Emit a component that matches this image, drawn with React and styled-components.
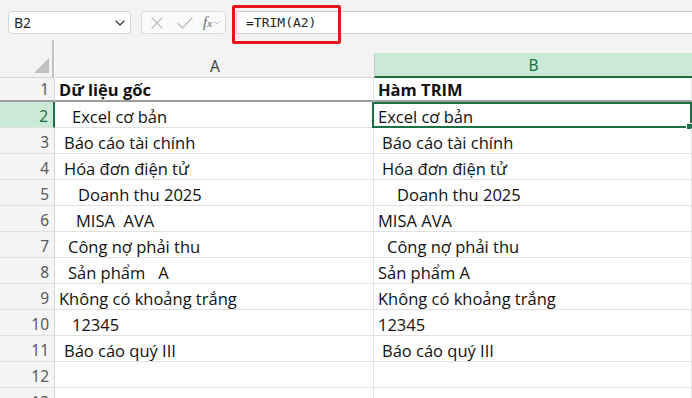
import React from 'react';
import styled, { createGlobalStyle } from 'styled-components';

const GREEN = '#1d7044';
const GREEN_BG = '#cae9d6';
const GRID = '#e1e1e1';

const Global = createGlobalStyle`
  html, body { margin: 0; padding: 0; background: #fff; }
  body { font-family: "Open Sans", "Noto Sans", sans-serif; }
`;

const Page = styled.div`
  width: 692px;
  height: 398px;
  overflow: hidden;
  background: #fff;
`;

const Toolbar = styled.div`
  position: relative;
  height: 40px;
  box-sizing: border-box;
  background: #f3f3f3;
  display: flex;
  align-items: flex-start;
  padding: 11px 0 0 8px;
`;

const NameBox = styled.div`
  width: 123px;
  height: 23px;
  box-sizing: border-box;
  background: #fff;
  border: 1px solid #d4d4d4;
  border-radius: 4px;
  display: flex;
  align-items: center;
  justify-content: space-between;
  padding: 0 3px 0 5px;
  font-family: "Noto Sans", sans-serif;
  font-size: 14px;
  color: #1f1f1f;
`;

const FxGroup = styled.div`
  margin-left: 10px;
  width: 85px;
  height: 23px;
  box-sizing: border-box;
  background: #fafafa;
  border: 1px solid #d9d9d9;
  border-radius: 4px;
  display: flex;
  align-items: center;
  padding-left: 8px;
`;

const IconSlot = styled.span`
  display: inline-flex;
  align-items: center;
  justify-content: center;
  width: ${(p) => p.w}px;
  height: 21px;
`;

const FxLabel = styled.span`
  font-family: "Liberation Serif", serif;
  font-style: italic;
  font-size: 15px;
  color: #6b6b6b;
  display: inline-flex;
  align-items: baseline;
  margin-left: 3px;
  line-height: 1;
  sub {
    font-size: 11px;
    font-style: italic;
    vertical-align: -3px;
    line-height: 1;
  }
`;

const FormulaInput = styled.div`
  margin-left: 10px;
  flex: 1;
  height: 23px;
  box-sizing: border-box;
  background: #fff;
  border-top: 1px solid #d0d0d0;
  border-bottom: 1px solid #d0d0d0;
  border-left: 1px solid #d0d0d0;
  display: flex;
  align-items: center;
  padding-left: 9px;
  font-family: "DejaVu Sans Mono", monospace;
  font-size: 13px;
  color: #1f1f1f;
`;

const Highlight = styled.div`
  position: absolute;
  left: 232px;
  top: 5px;
  width: 109px;
  height: 39px;
  box-sizing: border-box;
  border: 3px solid #e8141c;
  border-radius: 2px;
`;

const Row = styled.div`
  display: grid;
  grid-template-columns: 55px 319px 1fr;
  height: ${(p) => p.h}px;
`;

const Corner = styled.div`
  position: relative;
  background: #f3f3f3;
  border-right: 2px solid #c2c2c2;
  margin-right: 1px;
  border-bottom: 1px solid #d4d4d4;
`;

const CornerTriangle = styled.div`
  position: absolute;
  right: 3px;
  bottom: 4px;
  width: 0;
  height: 0;
  border-left: 15px solid transparent;
  border-bottom: 15px solid #c0c0c0;
`;

const ColHeader = styled.div`
  background: #f3f3f3;
  display: flex;
  flex-direction: column;
`;

const ColHeaderTop = styled.div`
  height: 13px;
  background: #f3f3f3;
`;

const ColHeaderLabel = styled.div`
  flex: 1;
  display: flex;
  align-items: center;
  justify-content: center;
  box-sizing: border-box;
  font-family: "Noto Sans", sans-serif;
  font-size: 15.5px;
  color: ${(p) => (p.active ? GREEN : '#444')};
  background: ${(p) => (p.active ? GREEN_BG : '#f3f3f3')};
  border-left: 1px solid ${(p) => (p.active ? '#b7d8c4' : 'transparent')};
  border-bottom: ${(p) => (p.active ? `2px solid ${GREEN}` : '1px solid #d4d4d4')};
  padding-top: 1px;
`;

const RowHeader = styled.div`
  box-sizing: border-box;
  display: flex;
  align-items: flex-end;
  justify-content: flex-end;
  padding: 0 5px 0 0;
  font-family: "Noto Sans", sans-serif;
  font-size: 15.5px;
  line-height: 21px;
  color: ${(p) => (p.active ? GREEN : '#5a5a5a')};
  background: ${(p) => (p.active ? GREEN_BG : '#f5f5f5')};
  border-right: ${(p) => (p.active ? `2px solid ${GREEN}` : '1px solid #d4d4d4')};
  border-bottom: ${(p) => (p.frozen ? '2px solid #9c9c9c' : `1px solid ${GRID}`)};
`;

const Cell = styled.div`
  position: relative;
  box-sizing: border-box;
  display: flex;
  align-items: flex-end;
  padding: 0 0 0 ${(p) => 4 + (p.indent || 0)}px;
  font-size: 16.5px;
  line-height: 21px;
  font-weight: ${(p) => (p.bold ? 700 : 400)};
  color: #111;
  white-space: pre;
  border-right: 1px solid ${GRID};
  border-bottom: ${(p) => (p.frozen ? '2px solid #9c9c9c' : `1px solid ${GRID}`)};
`;

const Selection = styled.div`
  position: absolute;
  left: -2px;
  top: 0;
  right: -1px;
  bottom: -1px;
  border: 2px solid ${GREEN};
  pointer-events: none;
`;

const FillHandle = styled.div`
  position: absolute;
  right: -3px;
  bottom: -4px;
  width: 5px;
  height: 5px;
  background: ${GREEN};
  border: 1px solid #fff;
`;

const Chevron = ({ color = '#333', size = 10 }) => (
  <svg width={size} height={size * 0.6} viewBox="0 0 10 6" fill="none">
    <path d="M1 1l4 4 4-4" stroke={color} strokeWidth="1.2" strokeLinecap="round" strokeLinejoin="round" />
  </svg>
);

const CrossIcon = () => (
  <svg width="12" height="12" viewBox="0 0 12 12" fill="none">
    <path d="M1 1l10 10M11 1L1 11" stroke="#bdbdbd" strokeWidth="1.2" strokeLinecap="round" />
  </svg>
);

const CheckIcon = () => (
  <svg width="16" height="12" viewBox="0 0 16 12" fill="none">
    <path d="M1 6.5l4.5 4.5L15 1" stroke="#bdbdbd" strokeWidth="1.2" strokeLinecap="round" strokeLinejoin="round" />
  </svg>
);

const rows = [
  { n: 1, a: 'Dữ liệu gốc', b: 'Hàm TRIM', bold: true },
  { n: 2, a: 'Excel cơ bản', ai: 13, b: 'Excel cơ bản', bi: 0 },
  { n: 3, a: 'Báo cáo tài chính', ai: 5, b: 'Báo cáo tài chính', bi: 4 },
  { n: 4, a: 'Hóa đơn điện tử', ai: 5, b: 'Hóa đơn điện tử', bi: 4 },
  { n: 5, a: 'Doanh thu 2025', ai: 19, b: 'Doanh thu 2025', bi: 19 },
  { n: 6, a: 'MISA  AVA', ai: 17, b: 'MISA AVA', bi: 0 },
  { n: 7, a: 'Công nợ phải thu', ai: 9, b: 'Công nợ phải thu', bi: 9 },
  { n: 8, a: 'Sản phẩm   A', ai: 9, b: 'Sản phẩm A', bi: 0 },
  { n: 9, a: 'Không có khoảng trắng', ai: 0, b: 'Không có khoảng trắng', bi: 0 },
  { n: 10, a: '12345', ai: 13, b: '12345', bi: 0 },
  { n: 11, a: 'Báo cáo quý III', ai: 5, b: 'Báo cáo quý III', bi: 4 },
  { n: 12, a: '', b: '' },
  { n: 13, a: '', b: '' },
];

export default function App() {
  return (
    <Page>
      <Global />
      <Toolbar>
        <NameBox>
          <span>B2</span>
          <IconSlot w={14}>
            <Chevron />
          </IconSlot>
        </NameBox>
        <FxGroup>
          <IconSlot w={14}>
            <CrossIcon />
          </IconSlot>
          <IconSlot w={12} />
          <IconSlot w={18}>
            <CheckIcon />
          </IconSlot>
          <IconSlot w={6} />
          <FxLabel>
            f<sub>x</sub>
          </FxLabel>
          <IconSlot w={10}>
            <Chevron color="#aaa" size={6} />
          </IconSlot>
        </FxGroup>
        <FormulaInput>=TRIM(A2)</FormulaInput>
        <Highlight />
      </Toolbar>

      <Row h={38}>
        <Corner>
          <CornerTriangle />
        </Corner>
        <ColHeader>
          <ColHeaderTop />
          <ColHeaderLabel>A</ColHeaderLabel>
        </ColHeader>
        <ColHeader>
          <ColHeaderTop />
          <ColHeaderLabel active>B</ColHeaderLabel>
        </ColHeader>
      </Row>

      {rows.map((r) => (
        <Row key={r.n} h={r.n === 1 ? 24 : 26}>
          <RowHeader active={r.n === 2} frozen={r.n === 1}>
            {r.n}
          </RowHeader>
          <Cell indent={r.ai} bold={r.bold} frozen={r.n === 1}>
            {r.a}
          </Cell>
          <Cell indent={r.bi} bold={r.bold} frozen={r.n === 1}>
            {r.b}
            {r.n === 2 && (
              <Selection>
                <FillHandle />
              </Selection>
            )}
          </Cell>
        </Row>
      ))}
    </Page>
  );
}
